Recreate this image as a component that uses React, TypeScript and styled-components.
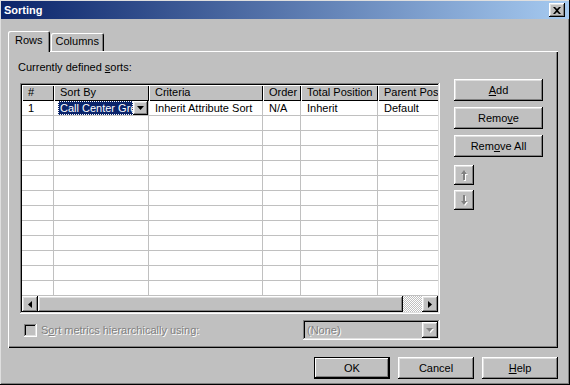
import React from "react";
import styled, { createGlobalStyle, css } from "styled-components";

const GlobalStyle = createGlobalStyle`
  html, body {
    margin: 0;
    padding: 0;
    background: #c0c0c0;
  }
  * {
    box-sizing: border-box;
  }
`;

const raised = css`
  box-shadow: inset -1px -1px #000, inset 1px 1px #fff, inset -2px -2px #808080,
    inset 2px 2px #dfdfdf;
`;

const sunken = css`
  box-shadow: inset -1px -1px #fff, inset 1px 1px #808080, inset -2px -2px #dfdfdf,
    inset 2px 2px #000;
`;

const disabledText = css`
  color: #808080;
  text-shadow: 1px 1px #fff;
`;

const columns = [
  { title: "#", width: 32 },
  { title: "Sort By", width: 95 },
  { title: "Criteria", width: 114 },
  { title: "Order", width: 38 },
  { title: "Total Position", width: 77 },
  { title: "Parent Position", width: 80 },
];

const firstRow = ["1", "Call Center Group", "Inherit Attribute Sort", "N/A", "Inherit", "Default"];
const emptyRows = 12;

const upArrow = "M3 0L6 4H4v6H2V4H0z";
const downArrow = "M2 0h2v6h2l-3 4-3-4h2z";

function App() {
  return (
    <>
      <GlobalStyle />
      <Window>
        <TitleBar>
          <Title>Sorting</Title>
          <CloseButton>
            <svg width="8" height="7" viewBox="0 0 8 7">
              <path d="M0 0h2l2 2 2-2h2L5 3.5 8 7H6L4 5 2 7H0l3-3.5z" fill="#000" />
            </svg>
          </CloseButton>
        </TitleBar>
        <Body>
          <TabStrip>
            <Tab $active>Rows</Tab>
            <Tab>Columns</Tab>
          </TabStrip>
          <Panel>
            <LeftCol>
              <Label>
                Currently defined <u>s</u>orts:
              </Label>
              <Grid>
                <HeaderRow>
                  {columns.map((c) => (
                    <HeaderCell key={c.title} $w={c.width}>
                      {c.title}
                    </HeaderCell>
                  ))}
                </HeaderRow>
                <GridBody>
                  <Row>
                    {columns.map((c, i) =>
                      i === 1 ? (
                        <Cell key={c.title} $w={c.width}>
                          <EditCell>
                            <Selected>{firstRow[i]}</Selected>
                            <CellDrop>
                              <svg width="7" height="4" viewBox="0 0 7 4">
                                <path d="M0 0h7L3.5 4z" fill="#000" />
                              </svg>
                            </CellDrop>
                          </EditCell>
                        </Cell>
                      ) : (
                        <Cell key={c.title} $w={c.width}>
                          {firstRow[i]}
                        </Cell>
                      )
                    )}
                  </Row>
                  {Array.from({ length: emptyRows }).map((_, r) => (
                    <Row key={r}>
                      {columns.map((c) => (
                        <Cell key={c.title} $w={c.width} />
                      ))}
                    </Row>
                  ))}
                </GridBody>
                <HScroll>
                  <ScrollArrow>
                    <svg width="4" height="7" viewBox="0 0 4 7">
                      <path d="M4 0v7L0 3.5z" fill="#000" />
                    </svg>
                  </ScrollArrow>
                  <Thumb />
                  <Track />
                  <ScrollArrow>
                    <svg width="4" height="7" viewBox="0 0 4 7">
                      <path d="M0 0v7l4-3.5z" fill="#000" />
                    </svg>
                  </ScrollArrow>
                </HScroll>
              </Grid>
              <OptionsRow>
                <CheckBox />
                <DisabledLabel>
                  S<u>o</u>rt metrics hierarchically using:
                </DisabledLabel>
                <Combo>
                  <ComboText>(None)</ComboText>
                  <ComboButton>
                    <svg width="8" height="5" viewBox="0 0 8 5">
                      <path d="M1 1h7L4.5 5z" fill="#fff" />
                      <path d="M0 0h7L3.5 4z" fill="#808080" />
                    </svg>
                  </ComboButton>
                </Combo>
              </OptionsRow>
            </LeftCol>
            <SideButtons>
              <Button>
                <u>A</u>dd
              </Button>
              <Button>
                Remo<u>v</u>e
              </Button>
              <Button>
                Rem<u>o</u>ve All
              </Button>
              <ArrowButton $top={8}>
                <svg width="7" height="11" viewBox="0 0 7 11">
                  <path d={upArrow} fill="#fff" transform="translate(1 1)" />
                  <path d={upArrow} fill="#808080" />
                </svg>
              </ArrowButton>
              <ArrowButton $top={5}>
                <svg width="7" height="11" viewBox="0 0 7 11">
                  <path d={downArrow} fill="#fff" transform="translate(1 1)" />
                  <path d={downArrow} fill="#808080" />
                </svg>
              </ArrowButton>
            </SideButtons>
          </Panel>
          <Footer>
            <Button $default $w={76}>
              OK
            </Button>
            <Button $w={76}>Cancel</Button>
            <Button $w={76}>
              <u>H</u>elp
            </Button>
          </Footer>
        </Body>
      </Window>
    </>
  );
}

export default App;

const Window = styled.div`
  width: 570px;
  height: 385px;
  padding: 1px;
  background: #c0c0c0;
  font-family: "Liberation Sans", Arial, sans-serif;
  font-size: 11px;
  color: #000;
  box-shadow: inset -1px -1px #000, inset 1px 1px #dfdfdf, inset -2px -2px #808080;
  overflow: hidden;
`;

const TitleBar = styled.div`
  height: 18px;
  display: flex;
  align-items: center;
  justify-content: space-between;
  padding: 0 4px 0 3px;
  background: linear-gradient(90deg, #0a246a, #a6caf0);
`;

const Title = styled.span`
  color: #fff;
  font-weight: bold;
  font-size: 11px;
`;

const CloseButton = styled.div`
  width: 16px;
  height: 14px;
  display: flex;
  align-items: center;
  justify-content: center;
  background: #c0c0c0;
  ${raised};
`;

const Body = styled.div`
  padding: 12px 11px 0 7px;
`;

const TabStrip = styled.div`
  display: flex;
  align-items: flex-end;
  height: 20px;
  position: relative;
  z-index: 1;
`;

const Tab = styled.div<{ $active?: boolean }>`
  height: ${(p) => (p.$active ? "21px" : "18px")};
  margin-bottom: ${(p) => (p.$active ? "-1px" : "0")};
  padding: ${(p) => (p.$active ? "3px 7px 0 7px" : "2px 5px 0 5px")};
  margin-left: ${(p) => (p.$active ? "0" : "1px")};
  background: #c0c0c0;
  border-radius: 2px 2px 0 0;
  box-shadow: inset 1px 1px #fff, inset -1px 0 #000, inset -2px 0 #808080;
`;

const Panel = styled.div`
  height: 297px;
  display: flex;
  background: #c0c0c0;
  box-shadow: inset 1px 1px #fff, inset -1px -1px #000, inset -2px -2px #808080;
`;

const LeftCol = styled.div`
  padding: 10px 0 0 10px;
  display: flex;
  flex-direction: column;
`;

const Label = styled.div`
  height: 13px;
  line-height: 13px;
`;

const Grid = styled.div`
  margin: 9px 0 0 2px;
  width: 420px;
  height: 231px;
  padding: 2px;
  background: #c0c0c0;
  ${sunken};
  display: flex;
  flex-direction: column;
`;

const HeaderRow = styled.div`
  display: flex;
  height: 16px;
  overflow: hidden;
  flex-shrink: 0;
`;

const HeaderCell = styled.div<{ $w: number }>`
  flex: 0 0 ${(p) => p.$w}px;
  height: 16px;
  line-height: 15px;
  padding-left: 6px;
  white-space: nowrap;
  overflow: hidden;
  background: #c0c0c0;
  box-shadow: inset 1px 1px #fff, inset -1px -1px #000;
`;

const GridBody = styled.div`
  height: 195px;
  overflow: hidden;
  background: #fff;
`;

const Row = styled.div`
  display: flex;
  height: 15px;
`;

const Cell = styled.div<{ $w: number }>`
  flex: 0 0 ${(p) => p.$w}px;
  height: 15px;
  line-height: 14px;
  padding-left: 6px;
  white-space: nowrap;
  overflow: hidden;
  background: #fff;
  border-right: 1px solid #c0c0c0;
  border-bottom: 1px solid #c0c0c0;
`;

const EditCell = styled.div`
  display: flex;
  height: 14px;
  margin-left: -2px;
`;

const Selected = styled.div`
  flex: 1;
  overflow: hidden;
  white-space: nowrap;
  background: #0a246a;
  color: #fff;
  padding-left: 2px;
  outline: 1px dotted #fff;
  outline-offset: -1px;
`;

const CellDrop = styled.div`
  flex: 0 0 15px;
  height: 14px;
  display: flex;
  align-items: center;
  justify-content: center;
  background: #c0c0c0;
  ${raised};
`;

const HScroll = styled.div`
  display: flex;
  height: 16px;
  flex-shrink: 0;
`;

const ScrollArrow = styled.div`
  flex: 0 0 16px;
  height: 16px;
  display: flex;
  align-items: center;
  justify-content: center;
  background: #c0c0c0;
  ${raised};
`;

const Thumb = styled.div`
  flex: 0 0 365px;
  height: 16px;
  background: #c0c0c0;
  ${raised};
`;

const Track = styled.div`
  flex: 1;
  height: 16px;
  background: repeating-conic-gradient(#fff 0 25%, #c0c0c0 0 50%) 0 0 / 2px 2px;
`;

const OptionsRow = styled.div`
  width: 420px;
  margin: 6px 0 0 2px;
  height: 20px;
  display: flex;
  align-items: center;
`;

const CheckBox = styled.div`
  width: 13px;
  height: 13px;
  margin: 0 4px 0 4px;
  background: #c0c0c0;
  ${sunken};
`;

const DisabledLabel = styled.span`
  flex: 1;
  white-space: nowrap;
  ${disabledText};
`;

const Combo = styled.div`
  width: 137px;
  height: 20px;
  padding: 2px;
  display: flex;
  background: #c0c0c0;
  ${sunken};
`;

const ComboText = styled.div`
  flex: 1;
  padding-left: 2px;
  line-height: 16px;
  ${disabledText};
`;

const ComboButton = styled.div`
  flex: 0 0 16px;
  height: 16px;
  display: flex;
  align-items: center;
  justify-content: center;
  background: #c0c0c0;
  ${raised};
`;

const SideButtons = styled.div`
  margin-left: 14px;
  padding-top: 28px;
  display: flex;
  flex-direction: column;
  align-items: flex-start;
  gap: 6px;
`;

const Button = styled.div<{ $default?: boolean; $w?: number }>`
  width: ${(p) => p.$w ?? 89}px;
  height: 22px;
  display: flex;
  align-items: center;
  justify-content: center;
  background: #c0c0c0;
  ${(p) =>
    p.$default
      ? css`
          box-shadow: inset -1px -1px #000, inset 1px 1px #000, inset -2px -2px #000,
            inset 2px 2px #fff, inset -3px -3px #808080;
        `
      : raised};
`;

const ArrowButton = styled.div<{ $top: number }>`
  width: 20px;
  height: 20px;
  margin-top: ${(p) => p.$top - 6}px;
  display: flex;
  align-items: center;
  justify-content: center;
  background: #c0c0c0;
  ${raised};
`;

const Footer = styled.div`
  margin-top: 9px;
  display: flex;
  justify-content: flex-end;
  gap: 8px;
`;
